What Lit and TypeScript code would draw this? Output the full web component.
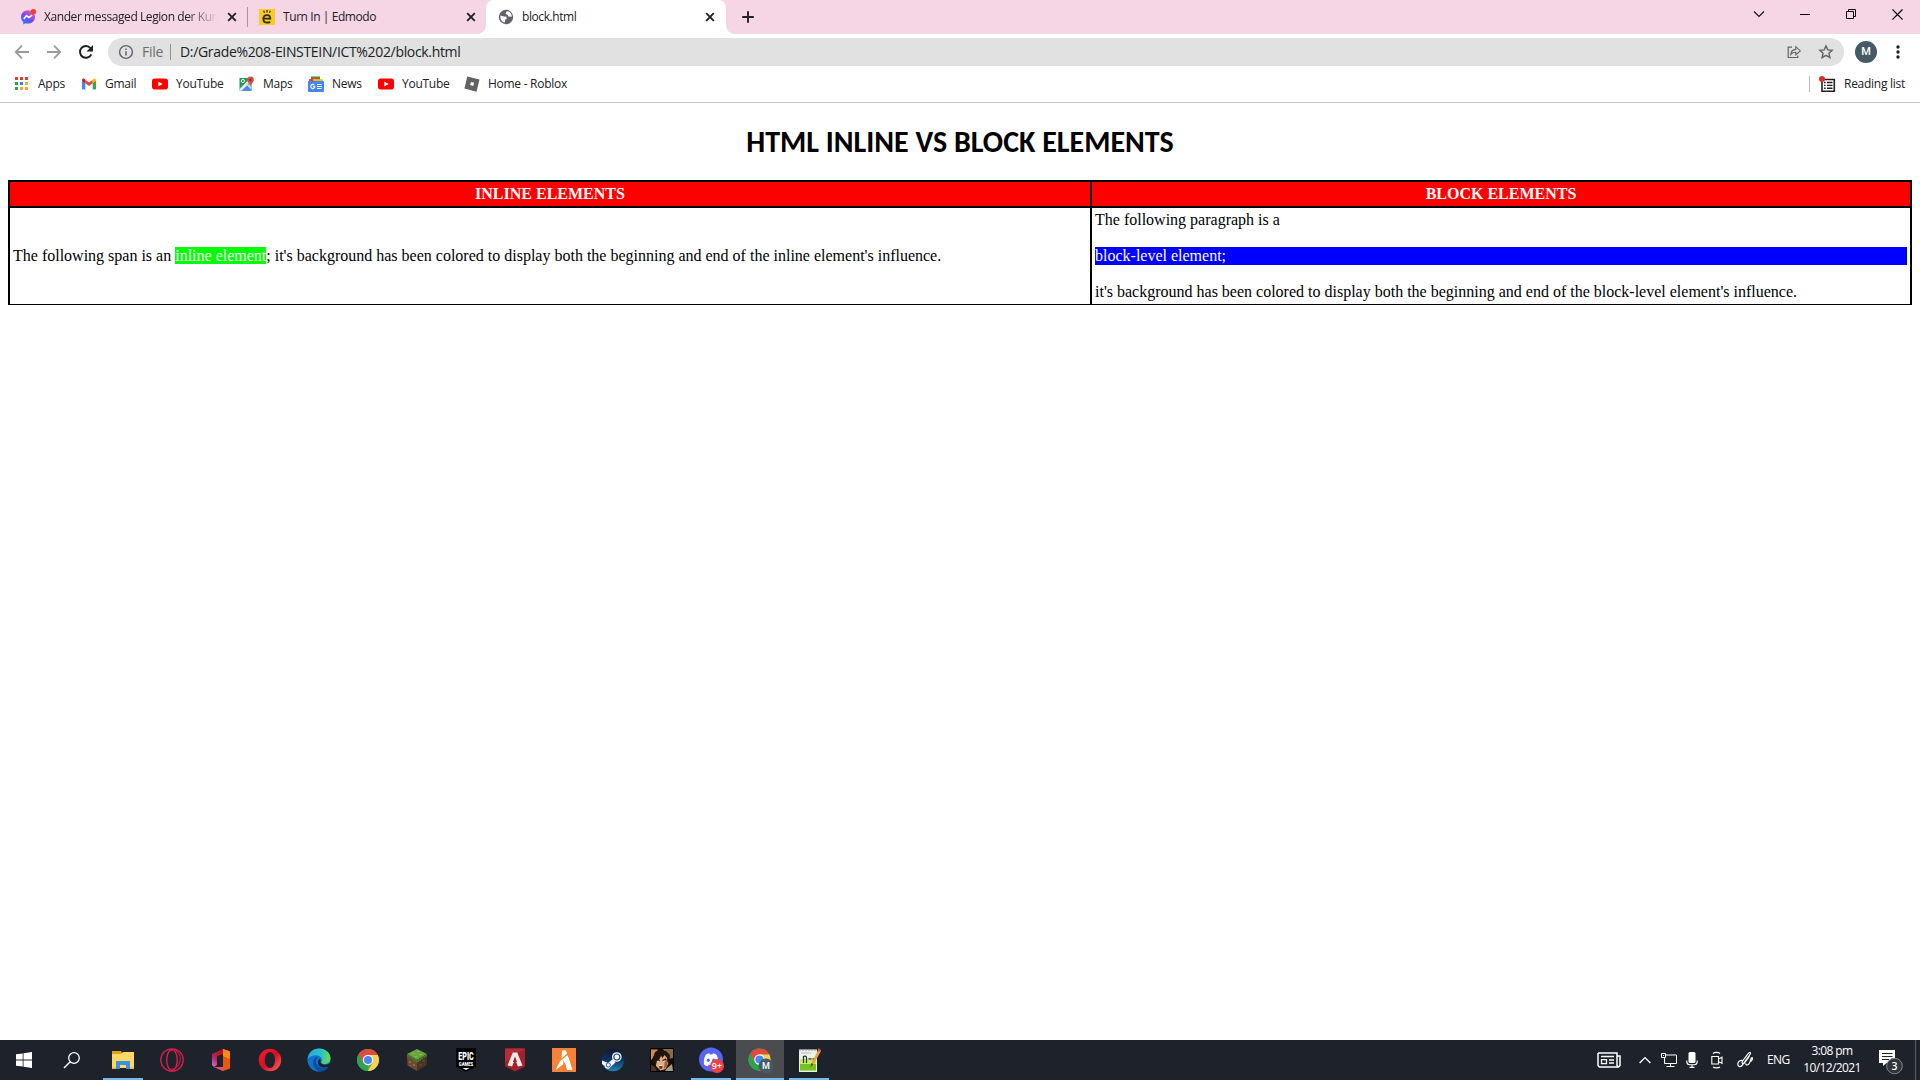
import { LitElement, html, css, svg } from "lit";
import { customElement } from "lit/decorators.js";
import { classMap } from "lit/directives/class-map.js";

const icon = (w: number, h: number, box: string, body: unknown) =>
  html`<svg width=${w} height=${h} viewBox=${box} fill="none">${body}</svg>`;

/* ---------- browser icons ---------- */
const closeX = icon(10, 10, "0 0 10 10", svg`<path d="M1.2 1.2l7.6 7.6M8.8 1.2L1.2 8.8" stroke="#202124" stroke-width="1.9"/>`);
const messenger = icon(16, 16, "0 0 16 16", svg`
  <defs><linearGradient id="ms" x1="0.2" y1="1" x2="0.9" y2="0"><stop offset="0" stop-color="#1888ff"/><stop offset=".45" stop-color="#7a45ff"/><stop offset="1" stop-color="#ff6a6f"/></linearGradient></defs>
  <path d="M8 1.2C4 1.2 1 4.1 1 7.9c0 2 .8 3.800 2.200 5v2.600l2.300-1.200c.8.2 1.600.3 2.500.3 4 0 7-2.900 7-6.700S12 1.200 8 1.200z" fill="url(#ms)"/>
  <path d="M3.800 9.900l2.700-3.300 2.400 2 3.200-2.400" stroke="#fff" stroke-width="1.600" stroke-linejoin="round"/>
  <circle cx="13.300" cy="2.700" r="2.700" fill="#fa3c35"/>`);
const edmodo = icon(16, 16, "0 0 16 16", svg`
  <rect width="16" height="16" fill="#fccc21"/>
  <path d="M4.500 9.600h6.800c0-2.300-1.300-3.500-3.300-3.500-2.200 0-3.700 1.600-3.700 3.900s1.500 3.700 3.800 3.700c1.200 0 2.200-.3 3-1" stroke="#2d2d2d" stroke-width="1.800"/>
  <path d="M8 1v2.500M4.600 1.700l1 2M11.400 1.700l-1 2" stroke="#2d2d2d" stroke-width="1.300"/>`);
const globe = icon(16, 16, "0 0 16 16", svg`
  <circle cx="8" cy="8" r="7.200" fill="#5f6368"/>
  <path d="M8.600 2.300l-1 2.600 2.300 1 .3 1.500 3.500.3c.2-2.200-1-4.300-2.800-5.200zM2.400 6.500l3.600 1 2.200.3.800 1.700-1.800 1.200-.4 2.900c-2.600-.4-4.800-2.900-4.400-7.100z" fill="#fff"/>`);
const plus = icon(12, 12, "0 0 12 12", svg`<path d="M6 .2v11.600M.2 6h11.600" stroke="#202124" stroke-width="1.900"/>`);
const chevronDown = icon(12, 8, "0 0 12 8", svg`<path d="M1 1.500l5 5 5-5" stroke="#111" stroke-width="1.100"/>`);
const minimize = icon(10, 10, "0 0 10 10", svg`<path d="M0 5.500h10" stroke="#000"/>`);
const restore = icon(10, 10, "0 0 10 10", svg`<path d="M.5 2.500h7v7h-7zM2.500 2.500v-2h7v7h-2" stroke="#000"/>`);
const closeWin = icon(11, 11, "0 0 11 11", svg`<path d="M.5.5l10 10M10.500.5l-10 10" stroke="#000" stroke-width="1.100"/>`);
const back = icon(16, 16, "0 0 16 16", svg`<path d="M15 8H2M8 1.700L1.700 8 8 14.300" stroke="#9a9a9c" stroke-width="1.800"/>`);
const forward = icon(16, 16, "0 0 16 16", svg`<path d="M1 8h13M8 1.700L14.300 8 8 14.300" stroke="#9a9a9c" stroke-width="1.800"/>`);
const reload = icon(16, 16, "0 0 16 16", svg`<path d="M13.300 10.300A5.900 5.900 0 1 1 12.500 4.200" stroke="#202124" stroke-width="2"/><path d="M15 1v6.500H8.500z" fill="#202124"/>`);
const info = icon(16, 16, "0 0 16 16", svg`<circle cx="8" cy="8" r="6.400" stroke="#5f6368" stroke-width="1.400"/><path d="M8 7.200v4.200M8 4.500v1.600" stroke="#5f6368" stroke-width="1.500"/>`);
const share = icon(16, 16, "0 0 16 16", svg`<path d="M6 3.200H2.200v10.300h9.600v-2" stroke="#5f6368" stroke-width="1.200"/><path d="M4.800 10.500c.2-3 1.900-4.900 5-5.100V2.700l4.500 4.200-4.500 4V8.300c-2.300 0-3.900.6-5 2.200z" stroke="#5f6368" stroke-width="1.100"/>`);
const star = icon(16, 16, "0 0 16 16", svg`<path d="M8 1.900l1.800 4 4.400.4-3.300 2.900 1 4.400L8 11.300l-3.900 2.300 1-4.400L1.800 6.300l4.400-.4z" stroke="#5f6368" stroke-width="1.400"/>`);
const dots = icon(4, 14, "0 0 4 14", svg`<g fill="#202124"><circle cx="2" cy="2" r="1.700"/><circle cx="2" cy="7" r="1.700"/><circle cx="2" cy="12" r="1.700"/></g>`);

const apps = icon(16, 16, "0 0 16 16", svg`
  <g fill="#e53b30"><path d="M1 1h3v3H1zM6 1h3v3H6zM11 1h3v3h-3z"/></g>
  <path d="M1 6h3v3H1z" fill="#2fa24c"/><path d="M6 6h3v3H6z" fill="#2e85f0"/><path d="M11 6h3v3h-3z" fill="#f7a823"/>
  <path d="M1 11h3v3H1z" fill="#2fa24c"/><path d="M6 11h3v3H6zM11 11h3v3h-3z" fill="#f7a823"/>`);
const gmail = icon(16, 16, "0 0 16 16", svg`
  <path d="M1 4v8.700c0 .5.400.8.8.8h2.500V6.500z" fill="#4285f4"/><path d="M15 4v8.700c0 .5-.4.800-.8.800h-2.500V6.500z" fill="#34a853"/>
  <path d="M4.300 7.200V3.700L8 6.500l3.700-2.800v3.500L8 10z" fill="#ea4335"/>
  <path d="M1 4c0-1.500 1.500-2 2.500-1.100l.8.700v3.600L1 4.800z" fill="#c5221f"/><path d="M15 4c0-1.500-1.500-2-2.500-1.100l-.8.700v3.600L15 4.800z" fill="#fbbc04"/>`);
const youtube = icon(16, 16, "0 0 16 16", svg`<rect y="2.400" width="16" height="11.200" rx="2.800" fill="#f00"/><path d="M6.300 5.500v5l4.300-2.500z" fill="#fff"/>`);
const maps = icon(16, 16, "0 0 16 16", svg`
  <path d="M.5 2h12v12.800H.5z" fill="#1b9c58"/><path d="M1.500 14.800L12.500 5v9.800z" fill="#4a89f3"/>
  <path d="M.5 13L10.500 3l2 2L2.500 14.800H.5z" fill="#e8eaed"/><path d="M8 9.500l4.500 4.500V7z" fill="#c9d8f2"/>
  <circle cx="3.900" cy="5" r="1.600" stroke="#fff" stroke-width="1"/>
  <path d="M11.500.6a3.300 3.300 0 0 0-3.300 3.300c0 2.500 2.600 3.200 3.300 6.600.7-3.400 3.300-4.100 3.300-6.600A3.300 3.300 0 0 0 11.500.6z" fill="#e04a3f"/><circle cx="11.500" cy="3.900" r="1.200" fill="#8d2a2a"/>`);
const news = icon(16, 16, "0 0 16 16", svg`
  <path d="M3 .5h9v6H3z" fill="#1e9c4d"/><path d="M1 3.200l8-2.500 2 5H1z" fill="#ea4335"/><path d="M5 3l10 .3v4H6z" fill="#fbbc04"/>
  <rect y="5" width="16" height="11" rx="1" fill="#4285f4"/>
  <path d="M6.500 9.200a2.100 2.100 0 1 0 .4 1.600H4.800M9 8.500h4.500M9 10.500h5M9 12.500h4.500" stroke="#fff" stroke-width="1.100"/>`);
const roblox = icon(16, 16, "0 0 16 16", svg`<path fill-rule="evenodd" d="M3.300.5L15.500 3.600 12.500 15.700.4 12.500zM7 5.900l-.9 3.200 3.100.8.900-3.100z" fill="#616264"/>`);
const readingList = icon(17, 17, "0 0 17 17", svg`
  <path d="M3 3.500h12.300v11.800H3z" stroke="#202124" stroke-width="1.600"/>
  <path d="M5 6.500h1.600M5 9.400h1.600M5 12.300h1.600M8 6.500h5.500M8 9.400h5.500M8 12.300h5.500" stroke="#202124" stroke-width="1.400"/>
  <circle cx="3" cy="3" r="3" fill="#d93025"/>`);

/* ---------- taskbar icons ---------- */
const windowsLogo = icon(16, 16, "0 0 16 16", svg`<path d="M0 2.300L6.700 1.400v6.200H0zM7.500 1.300L16 0v7.600H7.500zM0 8.400h6.700v6.200L0 13.700zM7.500 8.400H16V16l-8.500-1.300z" fill="#fff"/>`);
const search = icon(18, 18, "0 0 18 18", svg`<circle cx="11" cy="7" r="5.300" stroke="#fff" stroke-width="1.300"/><path d="M7.200 10.800L1 17" stroke="#fff" stroke-width="1.500"/>`);
const explorer = icon(24, 24, "0 0 24 24", svg`
  <path d="M1 3h9l1 2h12v15H1z" fill="#e3a113"/><path d="M1 6h9l2-2h11v16H1z" fill="#ffd764"/>
  <path d="M5 13h14v8h-4v-4H9v4H5z" fill="#3d90db"/><path d="M1 19.500h4V21H1zM19 19.500h4V21h-4z" fill="#f2b632"/>`);
const operaGx = icon(24, 24, "0 0 24 24", svg`
  <circle cx="12" cy="12" r="11.200" stroke="#d81e4d" stroke-width="1.300"/><ellipse cx="12" cy="12" rx="5.300" ry="10.300" stroke="#e0224f" stroke-width="1.300"/>
  <path d="M8.500 3.500c8-4 13 3 11.500 10-1 5-6.500 9.500-11.500 7" stroke="#b51a44" stroke-width="1.200"/>`);
const office = icon(24, 24, "0 0 24 24", svg`
  <defs><linearGradient id="of" x1="0" y1="1" x2=".4" y2="0"><stop offset="0" stop-color="#d979ce"/><stop offset=".5" stop-color="#b4246a"/><stop offset="1" stop-color="#b91414"/></linearGradient></defs>
  <path d="M3 6l11-5v5L8 8v9l-3 2-2-2z" fill="url(#of)"/><path d="M14 1l7 2.500v17L14 23z" fill="#e8590c"/><path d="M14 1l7 2.500V11l-7-3z" fill="#ff8a1c"/>
  <path d="M5 19l9 .5V23z" fill="#ef3f4a"/><path d="M5 19h9v4z" fill="#f04b68"/>`);
const opera = icon(24, 24, "0 0 24 24", svg`
  <defs><linearGradient id="op" x1="0" y1="0" x2="1" y2="1"><stop offset="0" stop-color="#ff1b2d"/><stop offset=".5" stop-color="#d90d22"/><stop offset="1" stop-color="#ff6a62"/></linearGradient></defs>
  <path fill-rule="evenodd" d="M12 .8a11.200 11.200 0 1 0 0 22.400A11.200 11.200 0 0 0 12 .8zm0 3.200c2.800 0 5 3.500 5 8s-2.200 8-5 8-5.200-3.500-5.200-8S9.200 4 12 4z" fill="url(#op)"/>`);
const edge = icon(24, 24, "0 0 24 24", svg`
  <defs><linearGradient id="e1" x1="0" y1=".3" x2="1" y2=".4"><stop offset="0" stop-color="#2aa8e8"/><stop offset=".6" stop-color="#2cc3c2"/><stop offset="1" stop-color="#6bdc4c"/></linearGradient></defs>
  <circle cx="12" cy="12" r="11.500" fill="#1173cf"/>
  <path d="M.6 11C1.500 4.500 6.300.5 12 .5c6.500 0 11.500 4.500 11.500 9.700 0 3.800-3 5.800-5.900 5.800-2.300 0-3.600-.6-3.600-1.500 0-.7 1-1 1-2.700C15 9.500 12.500 7.300 9 7.300 5 7.300 2.200 9 .6 11z" fill="url(#e1)"/>
  <path d="M9 9c-5 3-3.500 12 3 14.200 4 .5 7.500-1.500 9.500-4.500C15.500 22 9 18.500 9 13c0-2 .8-3 2-3.600z" fill="#0c4fa0"/>
  <path d="M14.200 15c1.500 2.300 5.500 2.300 9.800-.6v2.400l-1.700 1.500c-5 2.600-11.300.9-11.300-3.800 0-2 1-3.500 2-3.700 1.300 1.700-.4 2.500 1.200 4.200z" fill="#1e222a"/>`);
const chromeBody = svg`
  <circle cx="12" cy="12" r="11" fill="#4caf50"/>
  <path d="M12 1a11 11 0 0 0-9.500 5.500L7.200 14.700 12 7h9.800A11 11 0 0 0 12 1z" fill="#de4b3e"/>
  <path d="M21.800 7H12l4.600 8L11.800 23A11 11 0 0 0 21.800 7z" fill="#ffd04b"/>
  <path d="M2.500 6.500l4.700 8.200L12 17.200l-.3 5.800A11 11 0 0 1 2.500 6.500z" fill="#2fa24f"/>
  <circle cx="12" cy="12" r="5.200" fill="#fff"/><circle cx="12" cy="12" r="4.100" fill="#4a87ee"/>`;
const chrome = icon(24, 24, "0 0 24 24", chromeBody);
const minecraft = icon(24, 24, "0 0 24 24", svg`
  <path d="M2 6l10-5 10 5-10 6z" fill="#69a53d"/><path d="M2 6l10 6v11L2.500 17.500z" fill="#6b4a31"/><path d="M22 6l-10 6v11l9.500-5.500z" fill="#4c3424"/>
  <path d="M2 6l10 6v2.500l-2-.5v-1.500l-2 .5V11l-2 .5v-2L4 10V8.500L2 8.800zM22 6l-10 6v2.500l2-.5v-1.500l2 .5V11l2 .5v-2l2 .5V8.500l2 .3z" fill="#47782a"/>
  <path d="M7 5h2v1H7zM12 3h2v1h-2zM14 6h3v1h-3zM10 8h2v1h-2z" fill="#86c052"/><path d="M4 13h2v2H4zM8 16h2v2H8zM5 17h1v1H5z" fill="#8c6748"/><path d="M15 16h2v2h-2zM18 12h2v2h-2z" fill="#65472f"/>`);
const epic = icon(24, 24, "0 0 24 24", svg`
  <path d="M2 .3h20v18.400L12 23.700l-10-5z" fill="#000"/>
  <text x="12" y="12" text-anchor="middle" font-family="Roboto, sans-serif" font-weight="900" font-size="11.500" textLength="15.500" lengthAdjust="spacingAndGlyphs" fill="#fff">EPIC</text>
  <text x="12" y="17.800" text-anchor="middle" font-family="Roboto, sans-serif" font-weight="900" font-size="4.800" textLength="14.500" lengthAdjust="spacingAndGlyphs" fill="#fff">GAMES</text>
  <path d="M8.500 20h7L12 22z" fill="#fff"/>`);
const apex = icon(24, 24, "0 0 24 24", svg`
  <path d="M2 .5h20v18l-10 5-10-5z" fill="#a3202c"/><path d="M2 .5h20L2 14z" fill="#b62c38"/>
  <path d="M9.800 4.500h4.400l5.300 13-4.500 1-2-4 1-.8L12 8.500l-2 5.200 1 .8-2 4-4.500-1z" fill="#ecebeb"/>
  <path d="M12 13l2.200 3.500L12 20l-2.200-3.500z" fill="#a3202c"/>`);
const fivem = icon(24, 24, "0 0 24 24", svg`
  <rect width="24" height="24" fill="#f58236"/><path d="M10 2.500h4l1 3-5.500 5zM15.500 7l1.300 4-7.600 7L3.500 22l4.700-9zM11.500 14l1.800-1.700 1-1 2.200-2 4 12.700h-5.500l-1.500-6z" fill="#fff"/>
  <path d="M11 12.500l2 3-1.500 2z" fill="#f58236"/>`);
const steam = icon(24, 24, "0 0 24 24", svg`
  <defs><linearGradient id="st" x1="0" y1="0" x2="0" y2="1"><stop offset="0" stop-color="#101a35"/><stop offset=".5" stop-color="#0d3260"/><stop offset="1" stop-color="#2184bd"/></linearGradient></defs>
  <circle cx="12" cy="12" r="11.300" fill="url(#st)"/>
  <path d="M1 12.500l6 2.500 5-4 2.500 3.500-5 4.500c-1 3-6 2-5.800-1L1 16z" fill="#f2f4f6"/>
  <circle cx="15.800" cy="9" r="4.800" fill="#f2f4f6"/><circle cx="15.800" cy="9" r="3" stroke="#294c78" stroke-width="1.200"/><circle cx="7.300" cy="17" r="2.100" stroke="#346796" stroke-width="1"/>`);
const portrait = icon(24, 24, "0 0 24 24", svg`
  <rect width="24" height="24" fill="#15110e"/><path d="M13 1h10v9l-5 1z" fill="#8a6a48"/><path d="M1 1.500h7l-5 8-2 3z" fill="#d08e48"/>
  <path d="M5.500 8L11 5.500 18 8l.5 7-3 6-5 1.500L6 18z" fill="#e8ab80"/><path d="M15 10l3 2-1 6-3 3z" fill="#9c5f40"/>
  <path d="M3 10l2-6 4-2 7 1 4 4-1 9-1.500-2-.5-4-2.500-3-2 3-1.500-2-2 4-2 .5-1 4.500L4 14z" fill="#22150f"/>
  <path d="M6.500 11.800l3.500.8M12.500 12.500l3.500-1.300" stroke="#1c100c" stroke-width="1.300"/><path d="M7.500 13.200h2M13.500 13.200h2" stroke="#b8ddd3"/>
  <path d="M8.800 17.200h4l-.7 3.500H9.600z" fill="#702820"/><path d="M9 17h3.600v1H9z" fill="#fff"/>
  <path d="M17 20l5-4 1 7h-8z" fill="#a89c88"/><path d="M1 17l4 2 2 4H1z" fill="#4c3727"/><rect x=".5" y=".5" width="23" height="23" stroke="#000"/>`);
const discord = icon(26, 26, "0 0 26 26", svg`
  <circle cx="13" cy="12.500" r="12" fill="#5865f2"/>
  <path d="M6 17.500c-.5-4 .3-7.500 2-10 1-.7 2.200-1 3.200-1.200l.7 1.300h2.400l.7-1.300c1 .2 2.200.5 3.200 1.200 1.700 2.500 2.400 6 2 10-1.400 1-2.600 1.500-3.800 1.700l-.8-1.400h-5.100l-.8 1.400c-1.200-.2-2.400-.7-3.700-1.700z" fill="#fff"/>
  <ellipse cx="10.300" cy="13.200" rx="1.500" ry="1.700" fill="#5865f2"/><ellipse cx="15.700" cy="13.200" rx="1.500" ry="1.700" fill="#5865f2"/>
  <circle cx="19" cy="19" r="7" fill="#ec4147"/>
  <text x="19" y="22" text-anchor="middle" font-family="Open Sans, sans-serif" font-weight="600" font-size="9" fill="#fff">9+</text>`);
const chromeProfile = icon(26, 26, "0 0 26 26", svg`<g transform="translate(.5 .5)">${chromeBody}</g>
  <circle cx="19" cy="19" r="7.400" fill="#455a64"/>
  <text x="19" y="22.200" text-anchor="middle" font-family="Roboto, sans-serif" font-size="9" font-weight="500" fill="#fff">M</text>`);
const notepad = icon(24, 24, "0 0 24 24", svg`
  <path d="M2 1.500h18V24H2z" fill="#eceeea"/><path d="M3 11h16v11.500H3z" fill="#c3ec6c"/><path d="M3 16h16v6.500H3z" fill="#72c51e"/>
  <path d="M3 1v2M6 1v2M9 1v2M12 1v2M15 1v2M18 1v2" stroke="#9a9a9a"/><path d="M4 5h10" stroke="#bbb"/>
  <path d="M6.500 15V8M6.500 8.500c2-1 3 0 3 1.500v5M11.500 10.800h3M15.500 10.800h2.500" stroke="#29331c" stroke-width="1.200"/>
  <path d="M21.500 1.500L14.500 15l-1 4 3-2.500L24 3z" fill="#e8a33c"/><path d="M14.500 15l-1 4 3-2.500z" fill="#563c22"/><path d="M21.500 0L24 2v2l-3.200-1.500z" fill="#d8545a"/>`);

/* ---------- tray icons ---------- */
const newspaper = icon(24, 16, "0 0 24 16", svg`
  <path d="M1 1h19v12.500M1 1v12.500L2.500 15h19l1.500-1.500V4h-3M20 4v9.500l1 1.500" stroke="#fff" stroke-width="1.500"/>
  <path d="M4 4.500h13M12 8h5M12 11h5" stroke="#fff" stroke-width="1.400"/><path d="M4.500 7.700h5v4h-5z" stroke="#fff" stroke-width="1.300"/>`);
const chevronUp = icon(12, 8, "0 0 12 8", svg`<path d="M.6 7L6 1.600 11.400 7" stroke="#fff" stroke-width="1.300"/>`);
const network = icon(16, 14, "0 0 16 14", svg`<path d="M5 2h10.500v8.500H3.500V5M9.500 10.500v3M5.500 13.500h8M.5.5h4v4h-4z" stroke="#fff"/><path d="M2 2h1v1H2z" fill="#fff"/>`);
const mic = icon(12, 16, "0 0 12 16", svg`<rect x="2.500" width="7" height="11" rx="1.500" fill="#fff"/><path d="M.8 8.500v1.200c0 1.800 1.200 3 3 3h4.400c1.800 0 3-1.200 3-3V8.500M6 12.700v2.500M3.500 15.400h5" stroke="#fff" stroke-width="1.100"/>`);
const camera = icon(12, 18, "0 0 12 18", svg`<path d="M.8 5.500h6.700v7.500H.8zM7.500 8l3.500-1.800v6.100L7.500 10.500M2 2.500C3.500 1 7.500 1 9 2.500M2 16c1.500 1.200 5.500 1.200 7 0" stroke="#fff" stroke-width="1.100"/>`);
const pen = icon(17, 16, "0 0 17 16", svg`<path d="M5.500 8.500C3 8 .8 10 .8 12.200s2.500 3.200 4.200 1.300L13.300 2c.8-1.500-.8-2-1.800-.8L5.300 9.500c-.8 1.800.5 3 2 1.700l5.200-7M9 11.500c-.5 2 2 2.200 3.500-.5 1-2 1-4 2-5s1.500.5.500 2l-1 1.500" stroke="#fff" stroke-width="1.200"/>`);
const notification = icon(26, 26, "0 0 26 26", svg`
  <path d="M1 1h16v13H8.500l-3.500 3v-3H1z" fill="#fff"/><path d="M4 4.500h10.500M4 7.500h10.500M4 10.500h7" stroke="#20242c" stroke-width="1.100"/>
  <circle cx="16.500" cy="17" r="7.800" fill="#30343b" stroke="#84878c" stroke-width="1"/>
  <text x="16.500" y="20.800" text-anchor="middle" font-family="Open Sans, sans-serif" font-weight="600" font-size="10.500" fill="#fff">3</text>`);

const bookmarks = [
  { label: "Apps", glyph: apps, size: "b68" },
  { label: "Gmail", glyph: gmail, size: "b71" },
  { label: "YouTube", glyph: youtube, size: "b87" },
  { label: "Maps", glyph: maps, size: "b69" },
  { label: "News", glyph: news, size: "b70" },
  { label: "YouTube", glyph: youtube, size: "b86" },
  { label: "Home - Roblox", glyph: roblox, size: "b120" },
];

const pinned = [
  { glyph: windowsLogo }, { glyph: search, narrow: true }, { glyph: explorer, open: true }, { glyph: operaGx },
  { glyph: office }, { glyph: opera }, { glyph: edge }, { glyph: chrome }, { glyph: minecraft },
  { glyph: epic }, { glyph: apex }, { glyph: fivem }, { glyph: steam }, { glyph: portrait },
  { glyph: discord, open: true }, { glyph: chromeProfile, active: true }, { glyph: notepad, open: true },
] as { glyph: unknown; open?: boolean; active?: boolean; narrow?: boolean }[];

const shared = css`
  :host, * { box-sizing: border-box; }
  svg { display: block; flex: none; overflow: visible; }
`;

@customElement("browser-chrome")
class BrowserChrome extends LitElement {
  static styles = [shared, css`
    :host { display: block; height: 103px; font: 12px/16px "Open Sans", "Noto Sans", sans-serif; color: #202124; background: #fff; border-bottom: 1px solid #c6c6c6; }
    .strip { display: flex; height: 34px; background: #f6d5e4; }
    .tab { display: flex; align-items: center; height: 34px; gap: 8px; font-size: 12px; letter-spacing: -0.420px; white-space: nowrap; }
    .title { flex: 1; min-width: 0; overflow: hidden; }
    .first { width: 247px; padding: 0 10px 0 20px; }
    .first .title { margin-right: 1px; -webkit-mask-image: linear-gradient(90deg, #000 82%, transparent 100%); mask-image: linear-gradient(90deg, #000 82%, transparent 100%); }
    .second { width: 238px; padding: 0 10px 0 11px; }
    .divider { width: 1px; height: 20px; margin-top: 7px; background: #a8929c; }
    .current { position: relative; width: 240px; padding: 0 11px 0 12px; background: #fff; border-radius: 8px 8px 0 0; }
    .current::before, .current::after { content: ""; position: absolute; bottom: 0; width: 8px; height: 8px; }
    .current::before { left: -8px; background: radial-gradient(circle at 0 0, transparent 7.500px, #fff 8px); }
    .current::after { right: -8px; background: radial-gradient(circle at 100% 0, transparent 7.500px, #fff 8px); }
    .add { padding: 11px 0 0 16px; flex: 1; }
    .controls { display: flex; height: 28px; align-items: center; }
    .controls span { display: flex; width: 46px; justify-content: center; }
    .tools { display: flex; height: 36px; align-items: center; padding: 0 20px 0 14px; }
    .nav { display: flex; gap: 16px; width: 94px; }
    .omni { display: flex; align-items: center; flex: 1; height: 28px; margin-right: 11px; padding: 0 10px; border-radius: 14px; background: #e1e1e1; }
    .scheme { width: 28px; margin-left: 8px; font-size: 14px; letter-spacing: -0.300px; color: #6b6e72; }
    .bar { width: 1px; height: 16px; background: #909296; }
    .url { flex: 1; margin-left: 9px; font-size: 14px; letter-spacing: -0.330px; }
    .actions { display: flex; gap: 16px; }
    .avatar { width: 22px; height: 22px; border-radius: 50%; background: #455a64; color: #fff; font: 500 11px/22px Roboto, sans-serif; text-align: center; margin-right: 19px; }
    .marks { display: flex; align-items: center; height: 28px; padding: 0 15px 0 14px; font-size: 12px; letter-spacing: -0.270px; }
    .mark { display: flex; align-items: center; gap: 8px; white-space: nowrap; }
    .b68 { width: 67px; } .b71 { width: 71px; } .b87 { width: 87px; } .b69 { width: 69px; } .b70 { width: 70px; } .b86 { width: 86px; } .b120 { width: 120px; }
    .spacer { flex: 1; }
    .marks .bar { background: #bdbdbd; margin-right: 9px; }
  `];

  render() {
    return html`
      <div class="strip">
        <div class="tab first">${messenger}<span class="title">Xander messaged Legion der Kurs</span>${closeX}</div>
        <div class="divider"></div>
        <div class="tab second">${edmodo}<span class="title">Turn In | Edmodo</span>${closeX}</div>
        <div class="tab current">${globe}<span class="title">block.html</span>${closeX}</div>
        <div class="add">${plus}</div>
        <div class="controls"><span>${chevronDown}</span><span>${minimize}</span><span>${restore}</span><span>${closeWin}</span></div>
      </div>
      <div class="tools">
        <div class="nav">${back}${forward}${reload}</div>
        <div class="omni">${info}<span class="scheme">File</span><span class="bar"></span>
          <span class="url">D:/Grade%208-EINSTEIN/ICT%202/block.html</span>
          <div class="actions">${share}${star}</div>
        </div>
        <div class="avatar">M</div>${dots}
      </div>
      <div class="marks">
        ${bookmarks.map((b) => html`<div class="mark ${b.size}">${b.glyph}<span>${b.label}</span></div>`)}
        <div class="spacer"></div>
        <div class="bar"></div>
        <div class="mark">${readingList}<span>Reading list</span></div>
      </div>`;
  }
}

@customElement("lesson-page")
class LessonPage extends LitElement {
  static styles = [shared, css`
    :host { display: block; flex: 1; padding: 20px 8px 0; background: #fff; color: #000; font: 16px/18px "Liberation Serif", serif; }
    h1 { margin: 0 0 20px; font: bold 30px/37px Carlito, Lato, sans-serif; text-align: center; }
    .grid { display: grid; grid-template-columns: 1080px 818px; grid-template-rows: 24px 96px; gap: 2px; padding: 2px 2px 1px; background: #000; }
    .head { display: flex; align-items: center; justify-content: center; background: #f00; color: #fff; font-weight: bold; }
    .cell { display: flex; flex-direction: column; justify-content: center; padding: 3px; background: #fff; }
    .cell p { margin: 0; }
    .inline { background: #0f0; color: #fff; }
    .cell .block { margin: 18px 0; background: #00f; color: #fff; }
  `];

  render() {
    return html`
      <h1>HTML INLINE VS BLOCK ELEMENTS</h1>
      <div class="grid">
        <div class="head">INLINE ELEMENTS</div>
        <div class="head">BLOCK ELEMENTS</div>
        <div class="cell"><p>The following span is an <span class="inline">inline element</span>; it's background has been colored to display both the beginning and end of the inline element's influence.</p></div>
        <div class="cell"><p>The following paragraph is a</p><p class="block">block-level element;</p><p>it's background has been colored to display both the beginning and end of the block-level element's influence.</p></div>
      </div>`;
  }
}

@customElement("task-bar")
class TaskBar extends LitElement {
  static styles = [shared, css`
    :host { display: flex; height: 40px; background: #1e222a; color: #fff; font: 12px/17px "Open Sans", "Noto Sans", sans-serif; }
    .pins { display: flex; gap: 1px; flex: 1; }
    .pin { display: flex; width: 48px; align-items: center; justify-content: center; }
    .narrow { width: 46px; margin-right: 3px; }
    .open { background: linear-gradient(#76b9ed, #76b9ed) 50% 100% / 40px 2px no-repeat; }
    .active { background: linear-gradient(#76b9ed, #76b9ed) 50% 100% / 48px 2px no-repeat, #4a4c50; }
    .tray { display: flex; align-items: center; width: 323px; }
    .t1 { width: 42px; } .t2 { width: 22px; } .t3 { width: 25px; } .t4 { width: 25px; } .t5 { width: 26px; } .t6 { width: 30px; }
    .lang { width: 31px; padding-bottom: 1px; font-size: 12px; letter-spacing: -0.600px; }
    .clock { width: 68px; padding-bottom: 2px; text-align: center; font-size: 12px; letter-spacing: -0.600px; white-space: nowrap; }
    .note { width: 50px; padding: 4px 0 0 12px; }
    .peek { width: 5px; height: 40px; margin-left: -1px; border-left: 1px solid #5b5e64; }
  `];

  render() {
    return html`
      <div class="pins">
        ${pinned.map((p) => html`<div class=${classMap({ pin: true, open: !!p.open, active: !!p.active, narrow: !!p.narrow })}>${p.glyph}</div>`)}
      </div>
      <div class="tray">
        <div class="t1">${newspaper}</div><div class="t2">${chevronUp}</div><div class="t3">${network}</div>
        <div class="t4">${mic}</div><div class="t5">${camera}</div><div class="t6">${pen}</div>
        <div class="lang">ENG</div>
        <div class="clock">3:08 pm<br>10/12/2021</div>
        <div class="note">${notification}</div><div class="peek"></div>
      </div>`;
  }
}

@customElement("app-root")
class AppRoot extends LitElement {
  static styles = css`
    :host { display: flex; flex-direction: column; width: 1920px; height: 1080px; overflow: hidden; background: #fff; }
  `;
  render() {
    return html`<browser-chrome></browser-chrome><lesson-page></lesson-page><task-bar></task-bar>`;
  }
}
